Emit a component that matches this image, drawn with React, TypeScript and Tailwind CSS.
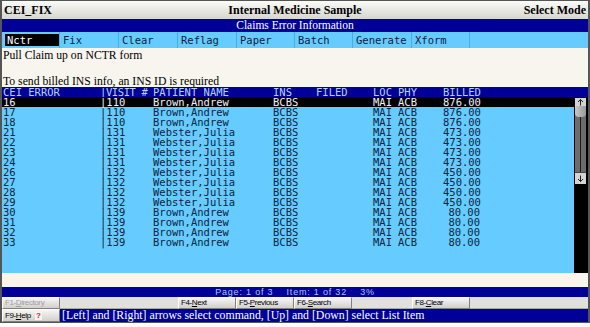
const menu = [
  { label: "Nctr", w: "w-[58px]" },
  { label: "Fix", w: "w-[59px]" },
  { label: "Clear", w: "w-[59px]" },
  { label: "Reflag", w: "w-[59px]" },
  { label: "Paper", w: "w-[58px]" },
  { label: "Batch", w: "w-[58px]" },
  { label: "Generate", w: "w-[59px]" },
  { label: "Xform", w: "w-[58px]" },
];

const rows = [
  { err: "16", visit: "110", name: "Brown,Andrew", billed: "876.00" },
  { err: "17", visit: "110", name: "Brown,Andrew", billed: "876.00" },
  { err: "18", visit: "110", name: "Brown,Andrew", billed: "876.00" },
  { err: "21", visit: "131", name: "Webster,Julia", billed: "473.00" },
  { err: "22", visit: "131", name: "Webster,Julia", billed: "473.00" },
  { err: "23", visit: "131", name: "Webster,Julia", billed: "473.00" },
  { err: "24", visit: "131", name: "Webster,Julia", billed: "473.00" },
  { err: "26", visit: "132", name: "Webster,Julia", billed: "450.00" },
  { err: "27", visit: "132", name: "Webster,Julia", billed: "450.00" },
  { err: "28", visit: "132", name: "Webster,Julia", billed: "450.00" },
  { err: "29", visit: "132", name: "Webster,Julia", billed: "450.00" },
  { err: "30", visit: "139", name: "Brown,Andrew", billed: "80.00" },
  { err: "31", visit: "139", name: "Brown,Andrew", billed: "80.00" },
  { err: "32", visit: "139", name: "Brown,Andrew", billed: "80.00" },
  { err: "33", visit: "139", name: "Brown,Andrew", billed: "80.00" },
];

// shared column template for the list header and rows
const cols =
  "grid grid-cols-[97px_53px_120px_43px_57px_25px_45px_37px] pl-px";

function Arrow({ down = false }: { down?: boolean }) {
  return (
    <svg width="7" height="7" viewBox="0 0 7 7" className={down ? "rotate-180" : ""}>
      <path d="M3.5 0.5 V6.5 M1 3 L3.5 0.5 L6 3" stroke="#202020" strokeWidth="1" fill="none" />
    </svg>
  );
}

function Scrollbar() {
  return (
    <div className="flex w-[14px] flex-col bg-black pl-px pt-px">
      <div className="flex h-[86px] w-[11px] flex-col bg-[#6c6c6c]">
        <div className="flex h-[8px] items-center justify-center bg-[#d4d4d4]">
          <Arrow />
        </div>
        <div className="h-[11px] rounded-b-[4px] bg-linear-to-r from-[#c8c8c8] to-[#9a9a9a]" />
        <div className="flex flex-1 justify-center">
          <div className="w-px bg-[#1a1a1a]" />
        </div>
        <div className="flex h-[12px] items-center justify-center border-t border-[#444] bg-[#d4d4d4]">
          <Arrow down />
        </div>
      </div>
    </div>
  );
}

function FnButton({
  pre,
  hot,
  post,
  disabled = false,
  extra,
}: {
  pre: string;
  hot: string;
  post: string;
  disabled?: boolean;
  extra?: React.ReactNode;
}) {
  return (
    <div
      className={`flex w-[58px] items-center border-t border-l border-t-white border-l-white border-r border-b border-r-[#808080] border-b-[#808080] bg-linear-to-b from-[#f6f6f2] to-[#d2d0ca] pl-[2px] font-['Liberation_Sans',sans-serif] text-[8px] tracking-[-0.4px] ${
        disabled ? "text-[#a0a0a0]" : "text-black"
      }`}
    >
      {pre}
      <span className="underline">{hot}</span>
      {post}
      {extra}
    </div>
  );
}

export default function App() {
  return (
    <div className="h-[327px] w-[590px] bg-white">
      <div className="flex h-[323px] w-[590px] flex-col border-x-2 border-y border-[#555] bg-[#f7f5ee]">
        {/* title bar */}
        <div className="grid h-[18px] grid-cols-[1fr_auto_1fr] items-center bg-linear-to-b from-[#fbfbf8] to-[#d6d6cf] px-[2px] font-['Liberation_Serif',serif] text-[12px] leading-none font-bold text-black">
          <span>CEI_FIX</span>
          <span>Internal Medicine Sample</span>
          <span className="text-right">Select Mode</span>
        </div>

        <div className="flex h-[13px] items-center justify-center bg-[#000099] font-['Liberation_Serif',serif] text-[11.5px] leading-none text-white">
          Claims Error Information
        </div>

        {/* command menu */}
        <div className="flex h-[16px] bg-[#66ccff] font-['DejaVu_Sans_Mono',monospace] text-[10.5px] leading-none text-[#0c1c3c]">
          {menu.map((m, i) => (
            <div key={m.label} className={`${m.w} flex items-center border-r border-[#45aee2]`}>
              {i === 0 ? (
                <span className="ml-[3px] flex h-[12px] w-[54px] items-center bg-black pl-[2px] text-white">
                  {m.label}
                </span>
              ) : (
                <span className="pl-[3px]">{m.label}</span>
              )}
            </div>
          ))}
        </div>

        {/* messages */}
        <div className="h-[39px] pl-px font-['Liberation_Serif',serif] text-[11.7px] leading-[13px] text-black">
          <div className="pt-px">Pull Claim up on NCTR form</div>
          <div>&nbsp;</div>
          <div>To send billed INS info, an INS ID is required</div>
        </div>

        {/* list header */}
        <div className={`${cols} h-[10px] bg-[#000099] font-['DejaVu_Sans_Mono',monospace] text-[10.5px] leading-[10px] whitespace-pre text-[#b4d4f8]`}>
          <span>CEI ERROR</span>
          <span className="tracking-[-0.4px]">|VISIT #</span>
          <span>PATIENT NAME</span>
          <span>INS</span>
          <span>FILED</span>
          <span>LOC</span>
          <span>PHY</span>
          <span>BILLED</span>
        </div>

        {/* list body */}
        <div className="flex h-[176px]">
          <div className="flex-1 bg-[#66ccff] font-['DejaVu_Sans_Mono',monospace] text-[10.5px] leading-[10px] text-[#0a2440]">
            {rows.map((r, i) => (
              <div key={r.err} className={`${cols} h-[10px] ${i === 0 ? "bg-black text-[#f2f2f2]" : ""}`}>
                <span>{r.err}</span>
                <span>|{r.visit}</span>
                <span>{r.name}</span>
                <span>BCBS</span>
                <span></span>
                <span>MAI</span>
                <span>ACB</span>
                <span className="text-right">{r.billed}</span>
              </div>
            ))}
          </div>
          <Scrollbar />
        </div>

        <div className="h-[14px]" />

        {/* status */}
        <div className="flex h-[10px] items-center justify-center bg-[#000099] font-['Liberation_Sans',sans-serif] text-[9px] leading-none tracking-[0.8px] whitespace-pre text-[#a8c8f0]">
          {"Page: 1 of 3    Item: 1 of 32    3%"}
        </div>

        {/* function keys */}
        <div className="flex h-[12px] bg-[#e2e0da]">
          <FnButton pre="F1-" hot="D" post="irectory" disabled />
          <div className="w-[118px] border-b border-[#a8a8a8]" />
          <FnButton pre="F4-" hot="N" post="ext" />
          <FnButton pre="F5-" hot="P" post="revious" />
          <FnButton pre="F6-" hot="S" post="earch" />
          <div className="w-[60px] border-b border-[#a8a8a8]" />
          <FnButton pre="F8-" hot="C" post="lear" />
          <div className="flex-1 border-b border-[#a8a8a8]" />
        </div>

        <div className="flex h-[13px]">
          <FnButton
            pre="F9-"
            hot="H"
            post="elp"
            extra={
              <span className="ml-[4px] flex h-[8px] w-[7px] items-center justify-center bg-[#f4f4f4] text-[8px] font-bold text-[#e01010]">
                ?
              </span>
            }
          />
          <div className="flex flex-1 items-center bg-[#000099] pl-[2px] font-['Liberation_Serif',serif] text-[11.8px] leading-none text-white">
            [Left] and [Right] arrows select command, [Up] and [Down] select List Item
          </div>
        </div>
      </div>
    </div>
  );
}
